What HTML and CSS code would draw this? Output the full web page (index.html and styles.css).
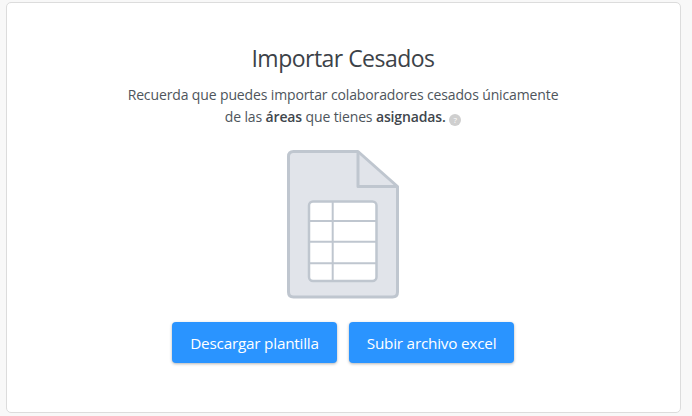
FILE: index.html
```html
<!DOCTYPE html>
<html lang="es">
<head>
    <meta charset="UTF-8">
    <title>Importar Cesados</title>
    <link rel="stylesheet" href="styles.css">
</head>
<body>
    <div class="card">
        <h1 class="title">Importar Cesados</h1>
        <p class="desc">
            Recuerda que puedes importar colaboradores cesados únicamente<br>
            de las <b>áreas</b> que tienes <b>asignadas.</b>
            <span class="help">?</span>
        </p>
        <svg class="file-icon" width="114" height="151" viewBox="0 0 114 151">
            <path d="M72 1.500 L7.500 1.500 Q2.500 1.500 2.500 6.500 L2.500 142 Q2.500 147 7.500 147 L106.500 147 Q111.500 147 111.500 142 L111.500 36.500 Z" fill="#e1e4ea" stroke="#bfc6cf" stroke-width="3" stroke-linejoin="round"/>
            <path d="M72 1.500 L72 36.500 L111.500 36.500" fill="none" stroke="#bfc6cf" stroke-width="3" stroke-linejoin="round"/>
            <rect x="23" y="51.500" width="67.500" height="79.500" rx="4" fill="#fff" stroke="#bfc6cf" stroke-width="2.500"/>
            <path d="M46.700 51.500 V131 M23 71 H90 M23 91.700 H90 M23 113.300 H90" fill="none" stroke="#bfc6cf" stroke-width="2"/>
        </svg>
        <div class="btn-box">
            <button class="btn">Descargar plantilla</button>
            <button class="btn">Subir archivo excel</button>
        </div>
    </div>
</body>
</html>
```

FILE: styles.css
```css
*{
    margin:0;
    padding:0;
    box-sizing:border-box;
}
body{
    height:416px;
    overflow:hidden;
    background:#f8f8f8;
    padding:2px 11px 3px 6px;
    font-family:"Open Sans","Noto Sans",sans-serif;
}
.card{
    height:411px;
    background:#fff;
    border:1px solid #dcdcdc;
    border-radius:5px;
    display:flex;
    flex-direction:column;
    align-items:center;
    padding:40px 1px 0 0;
}
.title{
    font-size:23px;
    font-weight:400;
    line-height:30px;
    letter-spacing:-.52px;
    color:#3c4248;
}
.desc{
    margin-top:11px;
    font-size:14px;
    line-height:22px;
    letter-spacing:-.13px;
    text-align:center;
    color:#4e555c;
}
.desc b{
    font-weight:600;
    color:#40464c;
}
.help{
    display:inline-block;
    width:12px;
    height:12px;
    border-radius:50%;
    background:#cfcfcf;
    color:#fff;
    font-size:8px;
    line-height:12px;
    text-align:center;
    vertical-align:-1px;
}
.file-icon{
    display:block;
    margin-top:22px;
}
.btn-box{
    display:flex;
    gap:12px;
    margin-top:21px;
}
.btn{
    width:165px;
    height:41px;
    border:0;
    border-radius:4px;
    background:#2a94ff;
    color:#fff;
    font-family:inherit;
    font-size:15.300px;
    letter-spacing:-.22px;
    box-shadow:0 1px 3px rgba(0,0,0,.3);
    cursor:pointer;
}
```
